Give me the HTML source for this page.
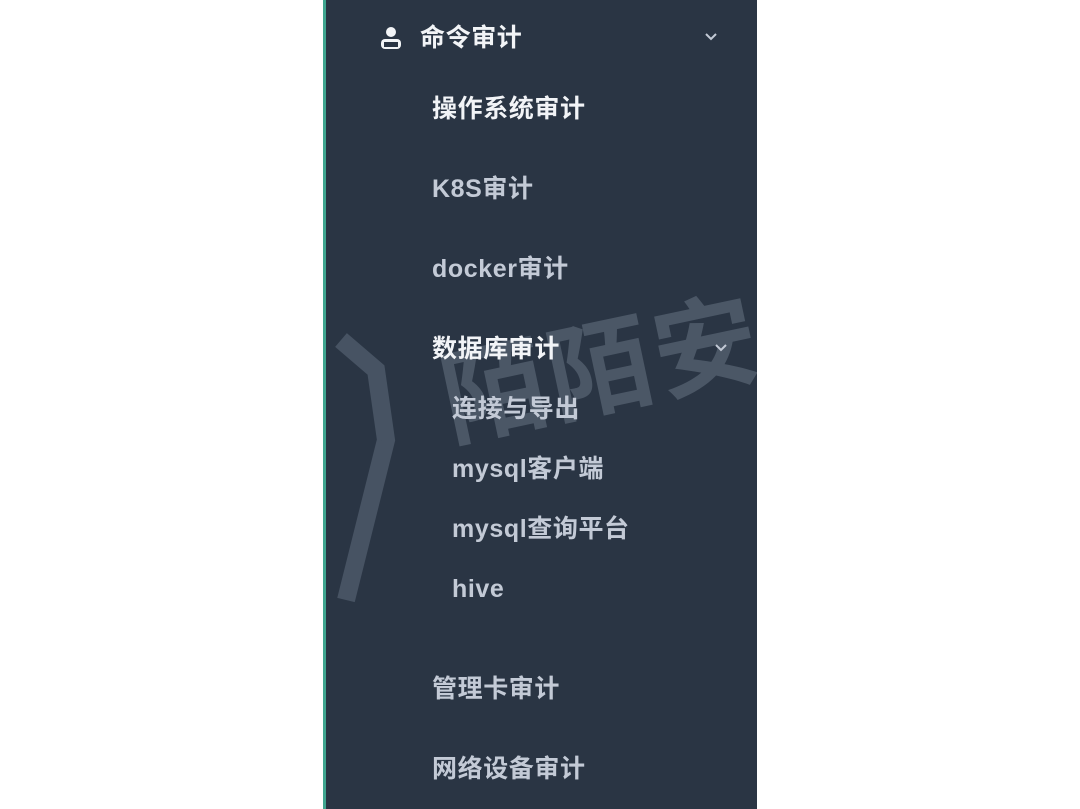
<!DOCTYPE html>
<html><head><meta charset="utf-8"><style>
html,body{margin:0;padding:0;background:#fff;width:1080px;height:809px;overflow:hidden}
.p{position:absolute;left:323px;top:0;width:434px;height:809px;background:#2a3544;border-left:3px solid #3fa58f;box-sizing:border-box;overflow:hidden}
.t{position:absolute;font-family:"Liberation Sans","Noto Sans CJK SC",sans-serif;font-weight:bold;font-size:25px;letter-spacing:0.6px;white-space:nowrap;line-height:1}
.w{color:#f2f4f7}.g{color:#c3cad6}
.wm{position:absolute;left:112px;top:285px;font-family:"Noto Sans CJK SC",sans-serif;font-weight:bold;font-size:104px;color:rgba(160,175,190,0.28);transform:rotate(-12deg);white-space:nowrap;letter-spacing:4px}
</style></head><body>
<div class="p">
<svg style="position:absolute;left:0;top:330px" width="90" height="290"><path d="M15 10 L50 40 L60 110 L20 270" fill="none" stroke="rgba(160,175,190,0.25)" stroke-width="18"/></svg>
<div class="wm">陌陌安</div>
<svg style="position:absolute;left:52px;top:25px" width="26" height="26" viewBox="0 0 26 26"><circle cx="13" cy="7" r="5" fill="#f2f4f7"/><rect x="3" y="14" width="20" height="10" rx="4" fill="#f2f4f7"/><rect x="6" y="17" width="14" height="5" fill="#2a3544"/></svg>
<div class="t w" style="left:94px;top:26px">命令审计</div>
<svg style="position:absolute;left:378px;top:32px" width="14" height="10"><path d="M2 2 L7 7 L12 2" fill="none" stroke="#c3cad6" stroke-width="2"/></svg>
<div class="t w" style="left:106px;top:97px">操作系统审计</div>
<div class="t g" style="left:106px;top:177px">K8S审计</div>
<div class="t g" style="left:106px;top:257px">docker审计</div>
<div class="t w" style="left:106px;top:337px">数据库审计</div>
<svg style="position:absolute;left:388px;top:343px" width="14" height="10"><path d="M2 2 L7 7 L12 2" fill="none" stroke="#c3cad6" stroke-width="2"/></svg>
<div class="t g" style="left:126px;top:397px">连接与导出</div>
<div class="t g" style="left:126px;top:457px">mysql客户端</div>
<div class="t g" style="left:126px;top:517px">mysql查询平台</div>
<div class="t g" style="left:126px;top:577px">hive</div>
<div class="t g" style="left:106px;top:677px">管理卡审计</div>
<div class="t g" style="left:106px;top:757px">网络设备审计</div>
</div>
</body></html>
